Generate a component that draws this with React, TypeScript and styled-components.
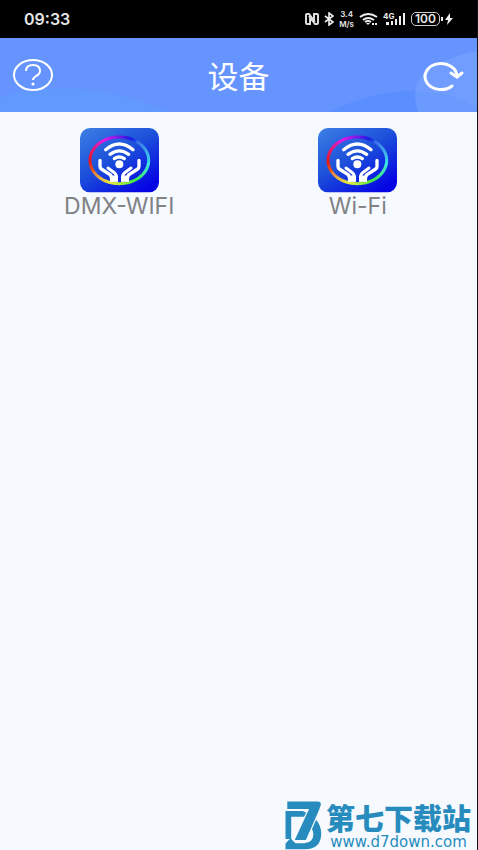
import React from "react";
import styled, { createGlobalStyle } from "styled-components";

const GlobalStyle = createGlobalStyle`
  * { box-sizing: border-box; }
  body { margin: 0; background: #f6faff; }
`;

const Page = styled.div`
  min-height: 100vh;
  display: flex;
  flex-direction: column;
  background: #f6faff;
  border-right: 1px solid #10131c;
  font-family: "DejaVu Sans", "Noto Sans CJK SC", sans-serif;
`;

const StatusBar = styled.div`
  height: 38px;
  padding: 0 24px;
  display: flex;
  align-items: center;
  justify-content: space-between;
  background: #000;
  color: #e6e6e6;
  font-family: Inter, sans-serif;
`;

const Clock = styled.time`
  font-size: 16px;
  font-weight: 600;
`;

const StatusIcons = styled.div`
  display: flex;
  align-items: center;
  gap: 5px;
  svg { display: block; }
`;

const Speed = styled.div`
  display: flex;
  flex-direction: column;
  align-items: center;
  font-size: 8px;
  line-height: 10px;
  font-weight: 600;
`;

const Battery = styled.div`
  display: flex;
  align-items: center;
  gap: 1px;
`;

const BatteryLevel = styled.span`
  width: 29px;
  height: 14px;
  border: 1px solid #ccc;
  border-radius: 5px;
  font-size: 12px;
  line-height: 12px;
  font-weight: 600;
  text-align: center;
`;

const Header = styled.header`
  position: relative;
  height: 74px;
  padding: 0 12px;
  display: grid;
  grid-template-columns: 42px 1fr 42px;
  align-items: center;
  background: #6594ff;
  isolation: isolate;
`;

const Waves = styled.svg`
  position: absolute;
  inset: 0;
  width: 100%;
  height: 100%;
  z-index: -1;
`;

const Title = styled.h1`
  margin: 0;
  color: #fff;
  text-align: center;
  font: 400 31px/40px "Noto Sans CJK SC", sans-serif;
`;

const HeaderButton = styled.button`
  padding: 0;
  border: 0;
  background: none;
  color: #fff;
  display: flex;
  cursor: pointer;
`;

const Devices = styled.main`
  flex: 1;
  display: grid;
  grid-template-columns: 1fr 1fr;
  align-content: start;
  padding-top: 16px;
`;

const Device = styled.button`
  padding: 0;
  border: 0;
  background: none;
  display: flex;
  flex-direction: column;
  align-items: center;
  color: #808286;
  font: 400 23px/26px Inter, sans-serif;
  cursor: pointer;
`;

const SiteMark = styled.footer`
  align-self: flex-end;
  display: flex;
  align-items: flex-end;
  gap: 4px;
  padding-right: 6px;
  color: #278cbd;
`;

const SiteText = styled.div`
  display: flex;
  flex-direction: column;
`;

const SiteName = styled.strong`
  font: 900 29px/36px "Noto Sans CJK SC", sans-serif;
`;

const SiteLink = styled.a`
  color: inherit;
  text-decoration: none;
  text-align: center;
  font-size: 15px;
  line-height: 15px;
`;

function ringPoint(degrees: number) {
  const a = (degrees * Math.PI) / 180;
  return `${118 - 88 * Math.cos(a)} ${97 - 70 * Math.sin(a)}`;
}

const ringHues = [355, 330, 295, 265, 228, 205, 185, 155, 115, 75, 48, 20, 355];

function hueAt(degrees: number) {
  const i = Math.floor(degrees / 30);
  const t = (degrees % 30) / 30;
  const from = ringHues[i];
  const to = i === 11 ? -5 : ringHues[i + 1];
  return from + (to - from) * t;
}

const ringSteps = Array.from({ length: 72 }, (_, i) => i * 5);

function Hand({ mirrored = false }: { mirrored?: boolean }) {
  return (
    <g
      fill="none"
      stroke="#fff"
      strokeWidth="10"
      strokeLinejoin="round"
      transform={mirrored ? "translate(237 0) scale(-1 1)" : undefined}
    >
      <path d="M60 97v18q0 5 4 8l26 17q5 4 5 17" strokeLinecap="round" />
      <path d="M84 120l20 15q5 4 5 12v9" strokeLinecap="round" strokeWidth="9" />
      <path d="M90 152h24" strokeWidth="19" />
    </g>
  );
}

function DeviceIcon({ id }: { id: string }) {
  return (
    <svg width="79" height="65" viewBox="0 0 237 195" aria-hidden="true">
      <defs>
        <linearGradient id={id} x1="0" y1="0" x2="0.75" y2="1">
          <stop offset="0" stopColor="#3c80e4" />
          <stop offset="0.5" stopColor="#1c50da" />
          <stop offset="1" stopColor="#0505e4" />
        </linearGradient>
      </defs>
      <rect width="237" height="193" rx="30" fill={`url(#${id})`} />
      <g fill="none" strokeWidth="9">
        {ringSteps.map((d) => (
          <path
            key={d}
            d={`M${ringPoint(d)}A88 70 0 0 1 ${ringPoint(d + 6)}`}
            stroke={`hsl(${hueAt(d)} 80% ${d > 120 && d < 330 ? 58 : 50}%)`}
          />
        ))}
      </g>
      <g fill="none" stroke="#fff" strokeWidth="10" strokeLinecap="round">
        <path d="M77 65q41-34 82 0" />
        <path d="M90 79q28-21 56 0" />
        <path d="M103 92q15-10 30 0" />
      </g>
      <circle cx="118" cy="109" r="12" fill="#fff" />
      <Hand />
      <Hand mirrored />
    </svg>
  );
}

function NfcIcon() {
  return (
    <svg width="14" height="14" viewBox="0 0 14 14" fill="none" stroke="#ddd" strokeWidth="2">
      <path d="M5 5v7H2q-1 0-1-1V3q0-1 1-1h2l6 8M9 9V2h3q1 0 1 1v8q0 1-1 1h-2L4 4" />
    </svg>
  );
}

function BluetoothIcon() {
  return (
    <svg width="10" height="14" viewBox="0 0 10 14" fill="none" stroke="#eee" strokeWidth="1.6">
      <path d="m1 4 8 6-4 3V1l4 3-8 6" />
    </svg>
  );
}

function WifiIcon() {
  return (
    <svg width="19" height="14" viewBox="0 0 19 14" fill="none" stroke="#eee" strokeWidth="2">
      <path d="M1 5q8-6 17 0M4 8q5-4 11 0M6 10q3-2 6 0" />
      <path d="m7 11 2 2 2-2z" fill="#eee" stroke="none" />
      <path d="M13 12h2M16 12h2" />
    </svg>
  );
}

function SignalIcon() {
  return (
    <svg width="23" height="14" viewBox="0 0 23 14" fill="#eee">
      <text x="0" y="7" fontSize="8" fontWeight="700" fontFamily="Inter, sans-serif">4G</text>
      <path d="M3 10h3v3H3zM8 9h2v4H8zM12 7h2v6h-2zM16 4h2v9h-2zM20 1h2v12h-2z" />
    </svg>
  );
}

function SiteLogo() {
  return (
    <svg width="38" height="50" viewBox="4 0 106 140" aria-hidden="true">
      <g fill="#278cbd">
        <path fillRule="evenodd" d="M8 31H56Q108 52 108 94Q108 138 62 138H8V122L20 109H8ZM24 47V109L36 121H60Q86 119 86 96Q86 79 70 70V47Z" />
        <path
          d="M13 4H98Q110 4 106 17L101 30L65 112H34L74 25H13Z"
          stroke="#f6faff"
          strokeWidth="7"
          paintOrder="stroke"
        />
      </g>
    </svg>
  );
}

export default function App() {
  return (
    <Page>
      <GlobalStyle />
      <StatusBar>
        <Clock>09:33</Clock>
        <StatusIcons>
          <NfcIcon />
          <BluetoothIcon />
          <Speed>
            <span>3.4</span>
            <span>M/s</span>
          </Speed>
          <WifiIcon />
          <SignalIcon />
          <Battery>
            <BatteryLevel>100</BatteryLevel>
            <svg width="12" height="14" viewBox="0 0 12 14" fill="#eee">
              <path d="M0 5h2v4H0zM9 1 4 8h3l-1 5 6-7H9z" />
            </svg>
          </Battery>
        </StatusIcons>
      </StatusBar>
      <Header>
        <Waves viewBox="0 0 478 74" preserveAspectRatio="none" aria-hidden="true">
          <path d="M0 59Q80 36 169 74H0z" fill="#6299ff" />
          <path d="M330 74Q375 52 416 53T478 70V74z" fill="#5b8fff" />
          <path d="M419 74Q408 42 436 28 458 16 478 13V74z" fill="#7ba6ff" fillOpacity=".5" />
        </Waves>
        <HeaderButton aria-label="帮助">
          <svg width="42" height="34" viewBox="0 0 42 34" fill="none" stroke="#fff">
            <ellipse cx="21" cy="17" rx="19" ry="15" strokeWidth="2" />
            <path d="M14 13q0-6 7-6t7 6q0 3-4 5-3 2-3 4" strokeWidth="2" />
            <circle cx="21" cy="26" r="1.6" fill="#fff" stroke="none" />
          </svg>
        </HeaderButton>
        <Title>设备</Title>
        <HeaderButton aria-label="刷新">
          <svg width="42" height="34" viewBox="0 0 42 34" fill="none" stroke="#fff" strokeWidth="3" strokeLinecap="round" strokeLinejoin="round">
            <path d="M29 28A16 13 0 1 1 34 19" />
            <path d="m28 15 6 4 5-4" />
          </svg>
        </HeaderButton>
      </Header>
      <Devices>
        <Device><DeviceIcon id="dmx-shade" />DMX-WIFI</Device>
        <Device><DeviceIcon id="wifi-shade" />Wi-Fi</Device>
      </Devices>
      <SiteMark>
        <SiteLogo />
        <SiteText>
          <SiteName>第七下载站</SiteName>
          <SiteLink href="http://www.d7down.com">www.d7down.com</SiteLink>
        </SiteText>
      </SiteMark>
    </Page>
  );
}
